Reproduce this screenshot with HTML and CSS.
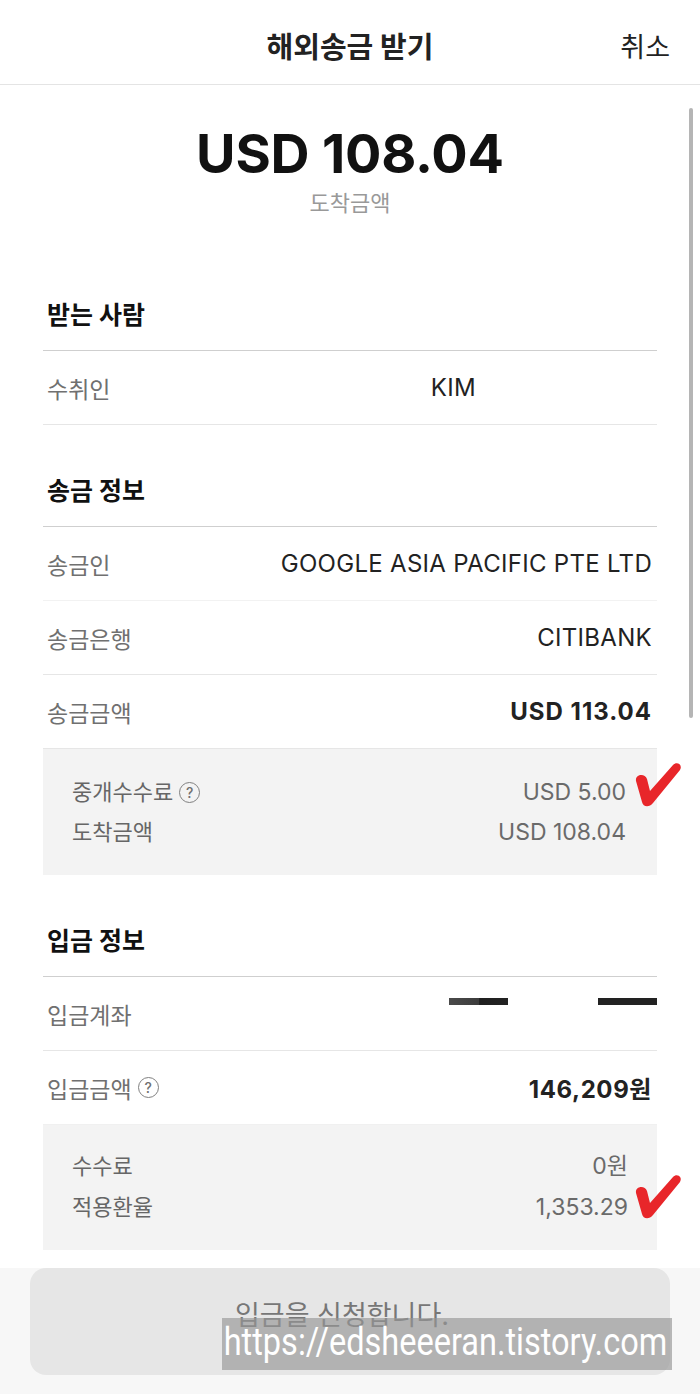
FILE: index.html
```html
<!DOCTYPE html>
<html lang="ko">
<head>
    <meta charset="UTF-8">
    <meta name="viewport" content="width=device-width, initial-scale=1.0">
    <title>해외송금 받기</title>
    <link rel="stylesheet" href="styles.css">
</head>
<body>
    <div class="screen">
        <header class="topbar">
            <span></span>
            <h1 class="topbar-title">해외송금 받기</h1>
            <button class="topbar-cancel">취소</button>
        </header>

        <main class="content">
            <section class="hero">
                <div class="hero-amount">USD 108.04</div>
                <div class="hero-caption">도착금액</div>
            </section>

            <section class="group">
                <h2 class="group-title">받는 사람</h2>
                <div class="row">
                    <span class="label">수취인</span>
                    <span class="value value-masked">KIM</span>
                </div>
            </section>

            <section class="group">
                <h2 class="group-title">송금 정보</h2>
                <div class="row row-faint">
                    <span class="label">송금인</span>
                    <span class="value">GOOGLE ASIA PACIFIC PTE LTD</span>
                </div>
                <div class="row">
                    <span class="label">송금은행</span>
                    <span class="value">CITIBANK</span>
                </div>
                <div class="row">
                    <span class="label">송금금액</span>
                    <span class="value value-strong">USD 113.04</span>
                </div>
                <div class="detail">
                    <div class="detail-row">
                        <span class="label">중개수수료 <i class="help">?</i></span>
                        <span>USD 5.00</span>
                    </div>
                    <div class="detail-row">
                        <span class="label">도착금액</span>
                        <span>USD 108.04</span>
                    </div>
                </div>
            </section>

            <section class="group">
                <h2 class="group-title">입금 정보</h2>
                <div class="row">
                    <span class="label">입금계좌</span>
                    <span class="account">
                        <span class="redact redact-a"></span>
                        <span class="redact redact-b"></span>
                    </span>
                </div>
                <div class="row row-flat">
                    <span class="label">입금금액 <i class="help">?</i></span>
                    <span class="value value-strong value-won">146,209원</span>
                </div>
                <div class="detail detail-tall">
                    <div class="detail-row">
                        <span class="label">수수료</span>
                        <span>0원</span>
                    </div>
                    <div class="detail-row">
                        <span class="label">적용환율</span>
                        <span>1,353.29</span>
                    </div>
                </div>
            </section>
        </main>

        <footer class="footer">
            <button class="submit">입금을 신청합니다.</button>
        </footer>

        <!-- overlays -->
        <div class="scrollbar"></div>
        <svg class="check check-fee" viewBox="0 0 52 52" width="52" height="52">
            <path d="M4,21 C3,14 13,13 15,19 L18,31 L41,5 C45,1 51,5 48,10 L21,43 C17,48 11,47 10,42 Z" fill="#e8262a"/>
        </svg>
        <svg class="check check-rate" viewBox="0 0 52 52" width="52" height="52">
            <path d="M4,21 C3,14 13,13 15,19 L18,31 L41,5 C45,1 51,5 48,10 L21,43 C17,48 11,47 10,42 Z" fill="#e8262a"/>
        </svg>
        <div class="watermark"><span>https://edsheeeran.tistory.com</span></div>
    </div>
</body>
</html>
```

FILE: styles.css
```css
body {
    margin: 0;
    font-family: Inter, "Noto Sans CJK KR", sans-serif;
    background: #fff;
    color: #222;
}

.screen {
    position: relative;
    width: 700px;
    height: 1394px;
    display: flex;
    flex-direction: column;
    overflow: hidden;
}

/* top bar */
.topbar {
    height: 85px;
    flex-shrink: 0;
    display: grid;
    grid-template-columns: 1fr auto 1fr;
    align-items: center;
    border-bottom: 1px solid #e4e4e4;
    box-sizing: border-box;
    padding-top: 6px;
}

.topbar-title {
    margin: 0;
    font-size: 29px;
    font-weight: 700;
    color: #222;
}

.topbar-cancel {
    justify-self: end;
    margin-right: 30px;
    padding: 0;
    border: 0;
    background: none;
    font-family: inherit;
    font-size: 27px;
    color: #222;
}

/* content */
.content {
    flex: 1;
    padding: 0 43px;
}

.hero {
    text-align: center;
    padding-top: 37px;
    margin-bottom: 64px;
}

.hero-amount {
    font-size: 54px;
    font-weight: 700;
    line-height: 64px;
    letter-spacing: -0.2px;
    color: #111;
}

.hero-caption {
    margin-top: 3px;
    font-size: 22px;
    line-height: 28px;
    color: #999;
}

.group + .group {
    margin-top: 32px;
}

.group-title {
    margin: 0;
    padding-left: 4px;
    font-size: 25px;
    font-weight: 700;
    line-height: 69px;
    color: #111;
    border-bottom: 1px solid #cfcfcf;
}

.row {
    height: 74px;
    box-sizing: border-box;
    padding: 0 5px 0 4px;
    display: flex;
    justify-content: space-between;
    align-items: center;
    border-bottom: 1px solid #e6e6e6;
}

.row-faint {
    border-bottom-color: #f2f2f2;
}

.row-flat {
    border-bottom-color: #f0f0f0;
}

.label {
    font-size: 23px;
    color: #707070;
    display: flex;
    align-items: center;
    gap: 6px;
}

.value {
    font-size: 24px;
    letter-spacing: 0.3px;
    color: #222;
}

.value-strong {
    font-weight: 700;
    letter-spacing: 1px;
}

.value-won {
    letter-spacing: 0.6px;
}

.value-masked {
    margin-right: 176px;
}

.help {
    width: 21px;
    height: 21px;
    border: 1.4px solid #808080;
    border-radius: 50%;
    box-sizing: border-box;
    font-style: normal;
    font-size: 14px;
    font-weight: 500;
    line-height: 19px;
    text-align: center;
    color: #707070;
}

/* redacted account number */
.account {
    align-self: flex-start;
    display: flex;
    gap: 90px;
    padding-top: 21px;
    margin-right: -5px;
}

.redact {
    width: 59px;
    height: 7px;
    background: #222;
}

.redact-a {
    background: linear-gradient(90deg, #4a4a4a 0%, #3c3c3c 50%, #1f1f1f 52%, #222 100%);
}

/* grey breakdown box */
.detail {
    background: #f3f3f3;
    padding: 23px 31px 23px 29px;
}

.detail-tall {
    padding: 21px 29px 22px 29px;
}

.detail-row {
    display: flex;
    justify-content: space-between;
    align-items: center;
    line-height: 40px;
    font-size: 23px;
    color: #6a6a6a;
}

.detail-tall .detail-row {
    line-height: 41px;
}

.detail .label {
    font-size: 22px;
    color: #666;
}

/* bottom button */
.footer {
    flex-shrink: 0;
    height: 126px;
    box-sizing: border-box;
    padding: 0 30px 19px;
    background: #f7f7f7;
}

.submit {
    width: 100%;
    height: 107px;
    border: 0;
    border-radius: 16px;
    background: #e6e6e6;
    font-family: inherit;
    font-size: 27px;
    color: #777;
    padding: 0 16px 16px 0;
}

/* overlays */
.scrollbar {
    position: absolute;
    left: 689px;
    top: 108px;
    width: 4px;
    height: 610px;
    border-radius: 2px;
    background: #b5b5b5;
}

.check {
    position: absolute;
    left: 632px;
}

.check-fee {
    top: 760px;
}

.check-rate {
    top: 1172px;
}

.watermark {
    position: absolute;
    left: 222px;
    top: 1318px;
    width: 450px;
    height: 52px;
    background: rgba(150, 150, 150, 0.66);
    overflow: hidden;
}

.watermark span {
    display: inline-block;
    font-family: Roboto, sans-serif;
    font-size: 38px;
    line-height: 48px;
    color: #fff;
    transform-origin: 0 0;
    transform: scaleX(0.855);
    white-space: nowrap;
    padding-left: 2px;
}
```
